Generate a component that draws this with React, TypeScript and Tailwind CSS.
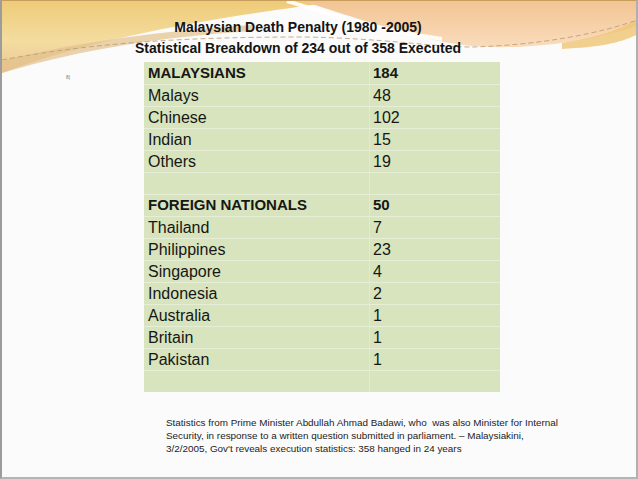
import React from "react";

const rows: { name: string; value: string; bold?: boolean }[] = [
  { name: "MALAYSIANS", value: "184", bold: true },
  { name: "Malays", value: "48" },
  { name: "Chinese", value: "102" },
  { name: "Indian", value: "15" },
  { name: "Others", value: "19" },
  { name: "", value: "" },
  { name: "FOREIGN NATIONALS", value: "50", bold: true },
  { name: "Thailand", value: "7" },
  { name: "Philippines", value: "23" },
  { name: "Singapore", value: "4" },
  { name: "Indonesia", value: "2" },
  { name: "Australia", value: "1" },
  { name: "Britain", value: "1" },
  { name: "Pakistan", value: "1" },
  { name: "", value: "" },
];

function Backdrop() {
  return (
    <svg
      className="absolute left-0 top-0"
      width="638"
      height="479"
      viewBox="0 0 638 479"
    >
      <defs>
        <linearGradient id="gold" x1="0" y1="0" x2="0" y2="1">
          <stop offset="0" stopColor="#eecb78" />
          <stop offset="0.55" stopColor="#f4dca0" />
          <stop offset="1" stopColor="#e9c994" />
        </linearGradient>
        <linearGradient id="peach" x1="0" y1="0" x2="0" y2="1">
          <stop offset="0" stopColor="#f3c493" />
          <stop offset="1" stopColor="#f9dcbc" />
        </linearGradient>
      </defs>
      <path d="M0,0 H340 C 250,12 110,30 0,72 Z" fill="url(#gold)" />
      <path d="M0,60 C 80,40 160,30 250,24 L 250,30 C 160,36 80,48 0,72 Z" fill="#e2c08c" opacity="0.7" />
      <path
        d="M300,0 H638 V24 C 600,38 530,50 470,45 C 420,40 370,22 300,0 Z"
        fill="url(#peach)"
      />
      <path d="M560,42 C 600,36 625,26 638,16 V 32 C 620,42 600,46 560,48 Z" fill="#efc674" opacity="0.8" />
      <path
        d="M285,0 C 330,14 380,30 440,38"
        stroke="#ffffff"
        strokeWidth="4"
        fill="none"
        opacity="0.9"
      />
      <path
        d="M0,59 C 90,42 180,36 300,36 C 380,37 430,46 470,46 C 540,44 600,32 638,18"
        stroke="#b99a6e"
        strokeWidth="1"
        strokeDasharray="5 3"
        fill="none"
        opacity="0.8"
      />
    </svg>
  );
}

export default function App() {
  return (
    <div
      className="relative w-[638px] h-[479px] overflow-hidden bg-[#fbfbfb] border-l-2 border-r-2 border-b-2 border-t border-l-[#9c9c9c] border-r-[#b0b0b0] border-b-[#b4b4b4] border-t-[#c89e5e]"
      style={{ fontFamily: '"Liberation Sans", Arial, sans-serif' }}
    >
      <Backdrop />
      <div className="relative flex flex-col">
        <div className="w-[592px] pt-[16px] text-center text-[14px] font-bold leading-[21px] text-[#141414]">
          <div>Malaysian Death Penalty (1980 -2005)</div>
          <div>Statistical Breakdown of 234 out of 358 Executed</div>
        </div>
        <div className="flex">
          <div className="w-[142px] pl-[64px] pt-[16px] text-[5px] leading-none text-[#777]">
            8|
          </div>
          <div className="mt-[3px] flex w-[356px] flex-col bg-[#d7e4bd]">
            {rows.map((r, i) => (
              <div
                key={i}
                className={`flex h-[22px] items-center text-[#161616] ${
                  r.bold ? "text-[15px] font-bold" : "text-[16px]"
                } ${i > 0 ? "border-t border-[#e6eed8]" : ""}`}
              >
                <div className="flex h-full w-[226px] items-center border-r border-[#e2ebd2] pl-[4px]">
                  {r.name}
                </div>
                <div className="flex h-full items-center pl-[3px]">{r.value}</div>
              </div>
            ))}
          </div>
        </div>
        <div className="ml-[164px] mt-[24px] text-[9.9px] leading-[13px] text-[#1c1c1c]">
          <div>
            Statistics from Prime Minister Abdullah Ahmad Badawi, who&nbsp; was also Minister for Internal
          </div>
          <div>
            Security, in response to a written question submitted in parliament. – Malaysiakini,
          </div>
          <div>3/2/2005, Gov't reveals execution statistics: 358 hanged in 24 years</div>
        </div>
      </div>
    </div>
  );
}
